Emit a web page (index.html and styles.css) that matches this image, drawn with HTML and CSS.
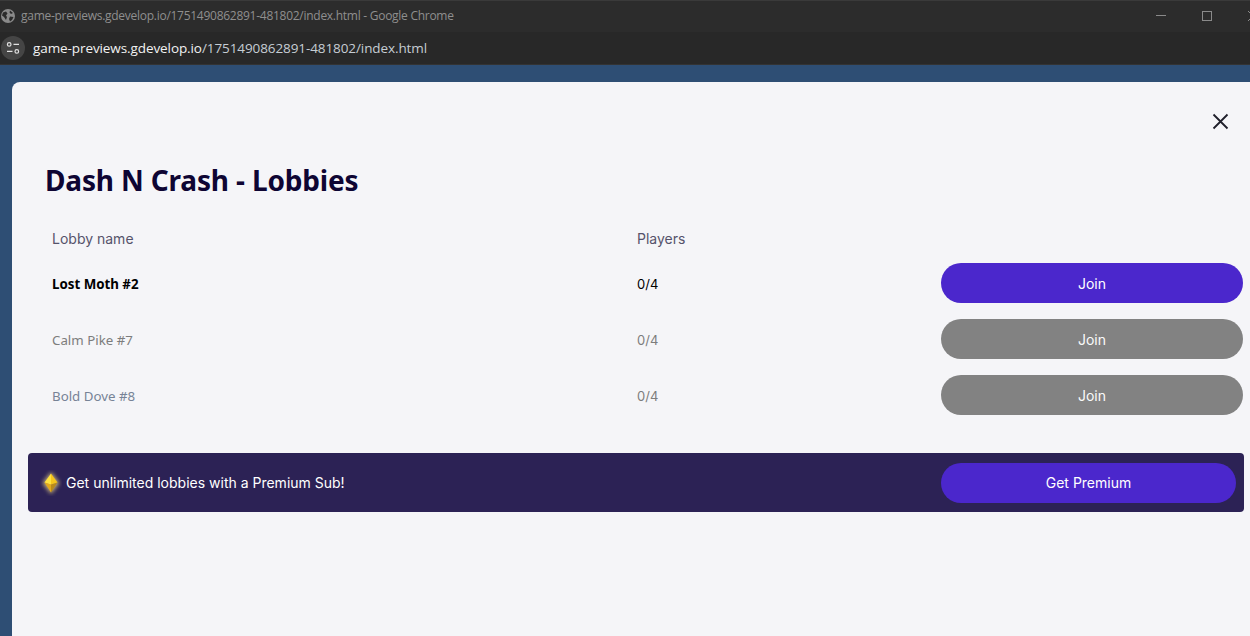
FILE: index.html
```html
<!DOCTYPE html>
<html lang="en">
<head>
<meta charset="utf-8">
<title>Dash N Crash - Lobbies</title>
<link rel="stylesheet" href="styles.css">
</head>
<body>
<header class="titlebar">
  <svg class="globe" width="14" height="14" viewBox="0 0 14 14"><circle cx="7" cy="7" r="7" fill="#8a8a8a"/><path d="M2 3.5 5 2.5 6.5 4.5 5 6.5 6 8 5 11 3 8 1 6.5ZM9 1.5 12 4 10 5 8.5 3.5ZM9 7.5 12.5 8 11 11 9 12.5 8 10Z" fill="#2b2b2b"/></svg>
  <span class="window-title">game-previews.gdevelop.io/1751490862891-481802/index.html - Google Chrome</span>
  <div class="window-controls">
    <span class="win-min"></span>
    <span class="win-max"></span>
    <svg class="win-close" width="10" height="10" viewBox="0 0 10 10"><path d="M0 0 10 10M10 0 0 10" stroke="#8a8a8a" stroke-width="1"/></svg>
  </div>
</header>
<div class="addressbar">
  <span class="site-chip">
    <svg width="14" height="14" viewBox="0 0 14 14" fill="none" stroke="#e2e2e2" stroke-width="1.2"><circle cx="3.2" cy="3.4" r="1.8"/><path d="M7.5 3.4H13M1 10.4H6.5"/><circle cx="10.8" cy="10.4" r="1.8"/></svg>
  </span>
  <span class="url"><span class="url-host">game-previews.gdevelop.io</span>/1751490862891-481802/index.html</span>
</div>
<main class="stage">
  <section class="modal">
    <div class="modal-top">
      <svg class="close-icon" width="17" height="17" viewBox="0 0 17 17"><path d="M1.5 1.5 15.5 15.5M15.5 1.5 1.5 15.5" stroke="#1f1f2b" stroke-width="1.8"/></svg>
    </div>
    <h1 class="modal-title">Dash N Crash - Lobbies</h1>
    <div class="lobby-table">
      <div class="head-cell">Lobby name</div>
      <div class="head-cell">Players</div>
      <div></div>
      <div class="name-cell active-name">Lost Moth #2</div>
      <div class="count-cell active-count">0/4</div>
      <button class="pill pill-primary">Join</button>
      <div class="name-cell muted-warm">Calm Pike #7</div>
      <div class="count-cell muted-warm">0/4</div>
      <button class="pill pill-grey">Join</button>
      <div class="name-cell muted-cool">Bold Dove #8</div>
      <div class="count-cell muted-warm">0/4</div>
      <button class="pill pill-grey">Join</button>
    </div>
    <div class="banner">
      <div class="banner-msg">
        <svg class="gem" width="22" height="26" viewBox="0 0 22 26">
          <defs><filter id="glow" x="-50%" y="-50%" width="200%" height="200%"><feGaussianBlur stdDeviation="2"/></filter></defs>
          <path d="M11 2 19.500 13 11 24 2.500 13Z" fill="#ffe98a" opacity=".7" filter="url(#glow)"/>
          <path d="M11 3.500 17.500 12.500 11 14.500Z" fill="#f5c51c"/>
          <path d="M11 3.500 4.500 12.500 11 14.500Z" fill="#ffe23e"/>
          <path d="M4.500 12.500 11 14.500 11 22.500Z" fill="#e3a91c"/>
          <path d="M17.500 12.500 11 14.500 11 22.500Z" fill="#b98a1a"/>
        </svg>
        <span>Get unlimited lobbies with a Premium Sub!</span>
      </div>
      <button class="pill pill-primary pill-premium">Get Premium</button>
    </div>
  </section>
</main>
</body>
</html>
```
FILE: styles.css
```css
* { box-sizing: border-box; }
html, body { margin: 0; height: 100%; }
body {
  width: 1250px;
  height: 636px;
  overflow: hidden;
  display: flex;
  flex-direction: column;
  background: #2e4e74;
  font-family: Inter, "Liberation Sans", sans-serif;
}
.titlebar {
  height: 32px;
  flex: none;
  display: flex;
  align-items: center;
  padding: 0 0 2px 1px;
  background: #2c2c2c;
  border-top: 1px solid #3a3a3a;
  color: #8f8f8f;
  font-family: "Open Sans", "Noto Sans", sans-serif;
  font-size: 12px;
}
.globe { flex: none; margin-right: 6px; }
.window-title { white-space: nowrap; letter-spacing: -.27px; }
.window-controls {
  margin-left: auto;
  display: flex;
  align-items: center;
  gap: 36px;
  margin-right: -8px;
}
.win-min { width: 10px; height: 1px; background: #8a8a8a; }
.win-max { width: 10px; height: 10px; border: 1px solid #8a8a8a; }
.addressbar {
  height: 33px;
  flex: none;
  display: flex;
  align-items: center;
  padding-left: 1px;
  background: #282828;
  border-bottom: 1px solid #333;
  font-family: "Open Sans", "Noto Sans", sans-serif;
  font-size: 13.5px;
  color: #c6cdd4;
}
.site-chip {
  width: 24px;
  height: 24px;
  flex: none;
  border-radius: 50%;
  background: #454545;
  display: flex;
  align-items: center;
  justify-content: center;
  margin-right: 8px;
}
.url { white-space: nowrap; letter-spacing: -.09px; }
.url-host { color: #f2f2f2; }
.stage {
  flex: 1;
  min-height: 0;
  padding: 17px 0 0 12px;
  display: flex;
}
.modal {
  flex: 1;
  background: #f5f5f8;
  border-radius: 8px 0 0 0;
  padding: 31px 6px 0 16px;
}
.modal-top {
  display: flex;
  justify-content: flex-end;
  height: 17px;
  padding-right: 15px;
}
.modal-title {
  margin: 30px 0 0 17px;
  font-family: "Noto Sans", "Open Sans", sans-serif;
  font-size: 28px;
  line-height: 40px;
  font-weight: 700;
  letter-spacing: -.16px;
  color: #0e0533;
}
.lobby-table {
  display: grid;
  grid-template-columns: 585px 304px 302px;
  grid-template-rows: 33px 56px 56px 56px;
  margin: 22px 1px 0 24px;
  align-items: center;
  font-size: 13px;
}
.head-cell { color: #55536b; font-size: 14px; margin-bottom: 1px; }
.name-cell, .count-cell { padding-top: 2px; }
.name-cell { font-family: "Noto Sans", sans-serif; font-size: 13.3px; }
.active-name { font-weight: 700; color: #000; }
.active-count { color: #000; }
.muted-warm { color: #7d7d7d; }
.muted-cool { color: #778396; }
.pill {
  border: 0;
  height: 40px;
  border-radius: 20px;
  color: #fff;
  font-family: Inter, sans-serif;
  font-size: 14px;
  width: 100%;
  padding: 0;
}
.pill-primary { background: #4b27cc; }
.pill-grey { background: #828282; color: #fafafa; }
.banner {
  margin-top: 30px;
  height: 59px;
  background: #2c2255;
  border-radius: 4px;
  display: flex;
  align-items: center;
  justify-content: space-between;
  padding: 0 8px 0 12px;
  color: #fff;
  font-size: 14px;
}
.banner-msg { display: flex; align-items: center; gap: 4px; }
.gem { flex: none; }
.pill-premium { width: 295px; }
```
